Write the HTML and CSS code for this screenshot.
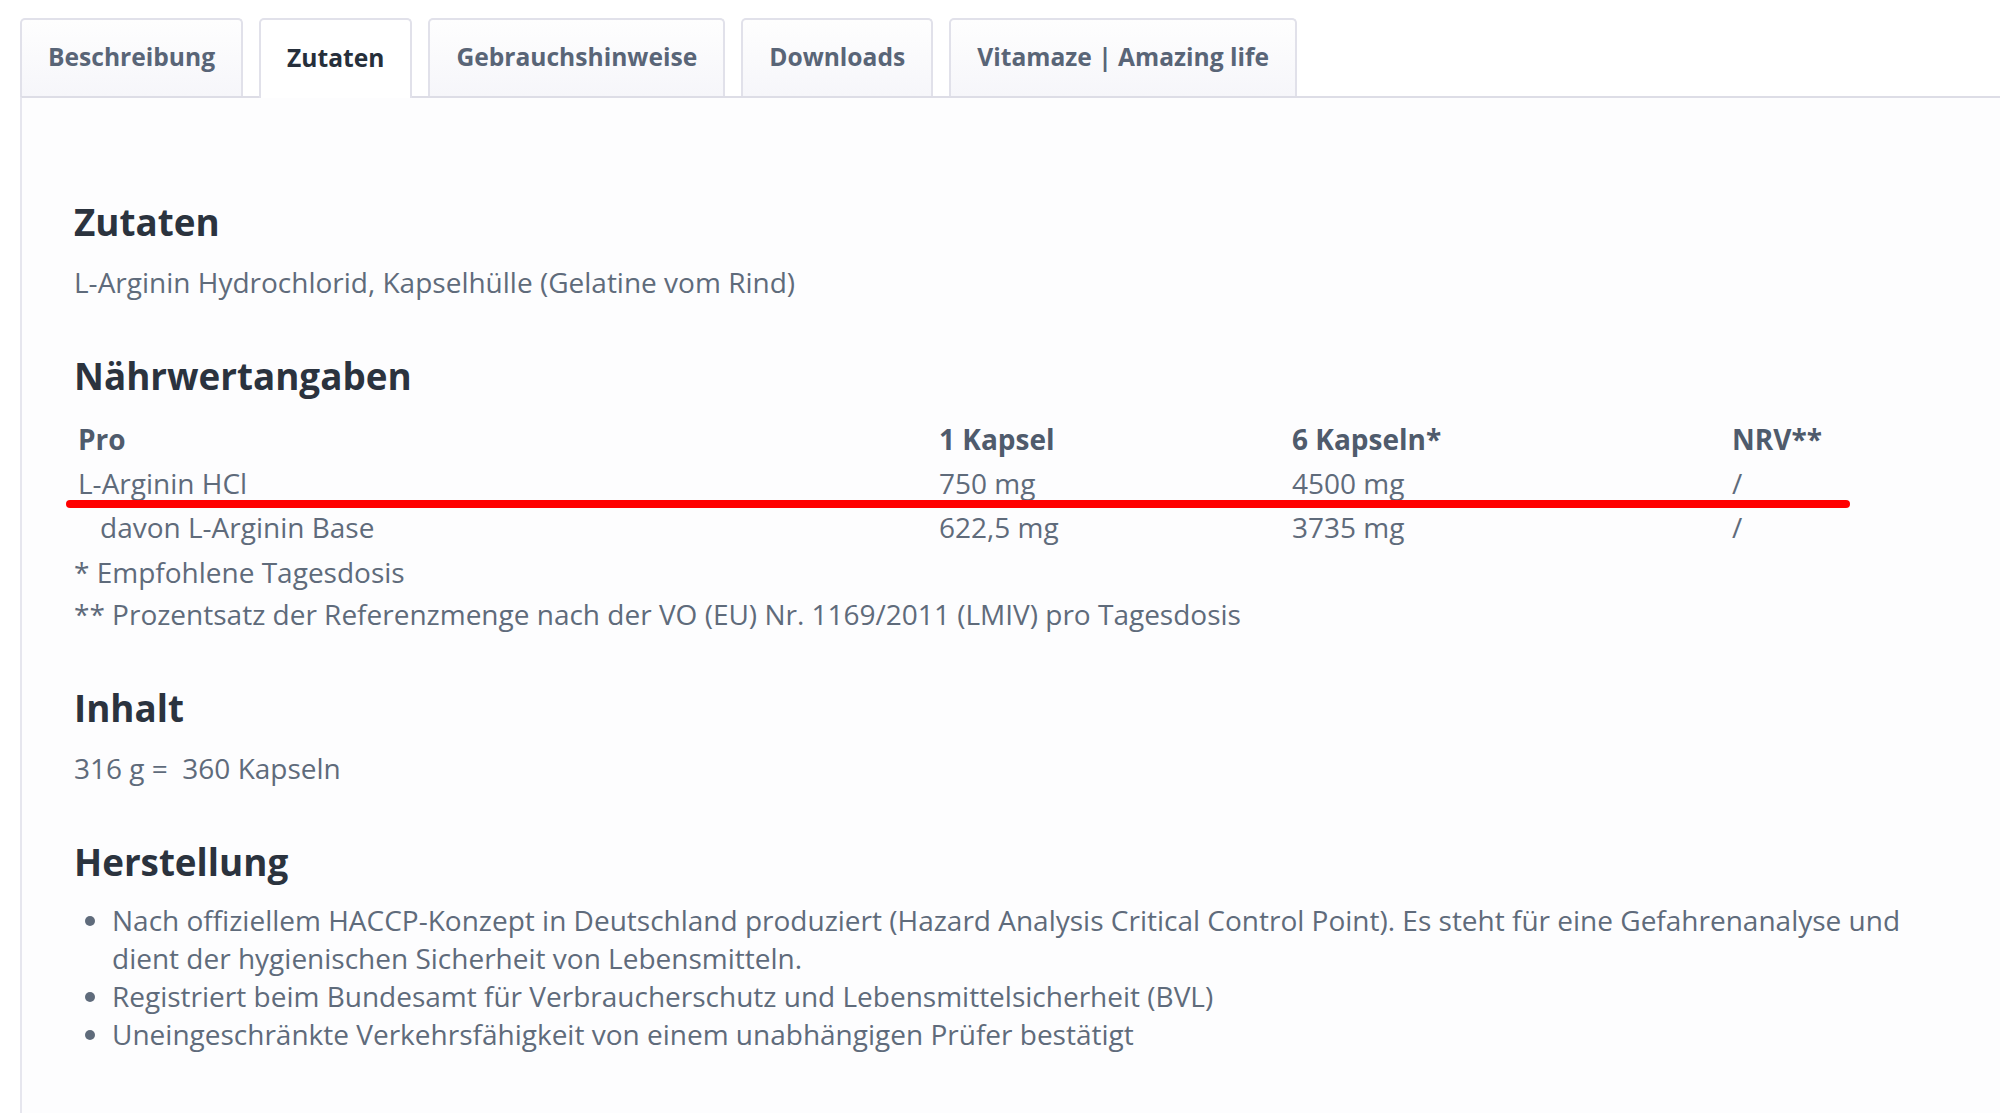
FILE: index.html
```html
<!DOCTYPE html>
<html lang="de">
<head>
  <meta charset="UTF-8">
  <title>Zutaten</title>
  <link rel="stylesheet" href="styles.css">
</head>
<body>
  <div class="tabs">
    <ul class="tab-nav">
      <li class="tab">Beschreibung</li>
      <li class="tab active">Zutaten</li>
      <li class="tab">Gebrauchshinweise</li>
      <li class="tab">Downloads</li>
      <li class="tab">Vitamaze | Amazing life</li>
    </ul>

    <div class="tab-pane">
      <h3>Zutaten</h3>
      <p>L-Arginin Hydrochlorid, Kapselhülle (Gelatine vom Rind)</p>

      <h3>Nährwertangaben</h3>
      <div class="table-wrap">
        <table class="nutri">
          <colgroup>
            <col class="c1"><col class="c2"><col class="c3"><col class="c4">
          </colgroup>
          <tr class="head">
            <td>Pro</td><td>1 Kapsel</td><td>6 Kapseln*</td><td>NRV**</td>
          </tr>
          <tr>
            <td>L-Arginin HCl</td><td>750 mg</td><td>4500 mg</td><td>/</td>
          </tr>
          <tr>
            <td class="sub">davon L-Arginin Base</td><td>622,5 mg</td><td>3735 mg</td><td>/</td>
          </tr>
        </table>
        <span class="marker"></span>
      </div>
      <div class="notes">
        <p>* Empfohlene Tagesdosis</p>
        <p>** Prozentsatz der Referenzmenge nach der VO (EU) Nr. 1169/2011 (LMIV) pro Tagesdosis</p>
      </div>

      <h3>Inhalt</h3>
      <p>316 g =&nbsp; 360 Kapseln</p>

      <h3>Herstellung</h3>
      <ul class="list">
        <li>Nach offiziellem HACCP-Konzept in Deutschland produziert (Hazard Analysis Critical Control Point). Es steht für eine Gefahrenanalyse und dient der hygienischen Sicherheit von Lebensmitteln.</li>
        <li>Registriert beim Bundesamt für Verbraucherschutz und Lebensmittelsicherheit (BVL)</li>
        <li>Uneingeschränkte Verkehrsfähigkeit von einem unabhängigen Prüfer bestätigt</li>
      </ul>
    </div>
  </div>
</body>
</html>
```

FILE: styles.css
```css
body {
  margin: 0;
  background: #fff;
  font-family: 'Open Sans', sans-serif;
  color: #5f6b7b;
  overflow: hidden;
}
.tabs {
  padding: 18px 0 0 20px;
}
.tab-nav {
  display: flex;
  gap: 16px;
  list-style: none;
  margin: 0;
  padding: 0;
  position: relative;
  z-index: 1;
}
.tab {
  height: 78px;
  padding: 0 26px 3px;
  box-sizing: border-box;
  display: flex;
  align-items: center;
  font-size: 24.6px;
  font-weight: 700;
  color: #596577;
  background: linear-gradient(#fefefe, #f6f6fa);
  border: 2px solid #e1e1ea;
  border-bottom: none;
  border-radius: 5px 5px 0 0;
}
.tab.active {
  background: #fff;
  color: #262f3b;
  height: 80px;
  margin-bottom: -2px;
}
.tab-pane {
  border-top: 2px solid #dddde6;
  border-left: 2px solid #e6e6ee;
  background: #fdfdfe;
  padding: 102px 60px 60px 52px;
}
h3 {
  margin: 53px 0 19px;
  font-size: 36.8px;
  line-height: 44px;
  font-weight: 700;
  color: #2b333e;
}
.tab-pane h3:first-child {
  margin-top: 0;
}
p {
  margin: 0;
  font-size: 28px;
  line-height: 38px;
}
.table-wrap {
  position: relative;
}
.nutri {
  border-collapse: collapse;
  font-size: 28px;
  line-height: 38px;
}
.nutri td {
  padding: 3px 4px;
}
.nutri .head td {
  font-weight: 700;
  color: #4f5b6c;
}
.nutri .sub {
  padding-left: 26px;
}
.c1 { width: 861px; }
.c2 { width: 353px; }
.c3 { width: 440px; }
.c4 { width: 130px; }
.marker {
  position: absolute;
  left: -8px;
  top: 83px;
  width: 1784px;
  height: 8px;
  background: #ff0000;
  border-radius: 4px;
}
.notes {
  margin-top: 2px;
}
.notes p {
  line-height: 42px;
}
.notes + h3 {
  margin-top: 51px;
}
.list {
  margin: -2px 0 0;
  padding-left: 38px;
  font-size: 28px;
  line-height: 38px;
}
```
